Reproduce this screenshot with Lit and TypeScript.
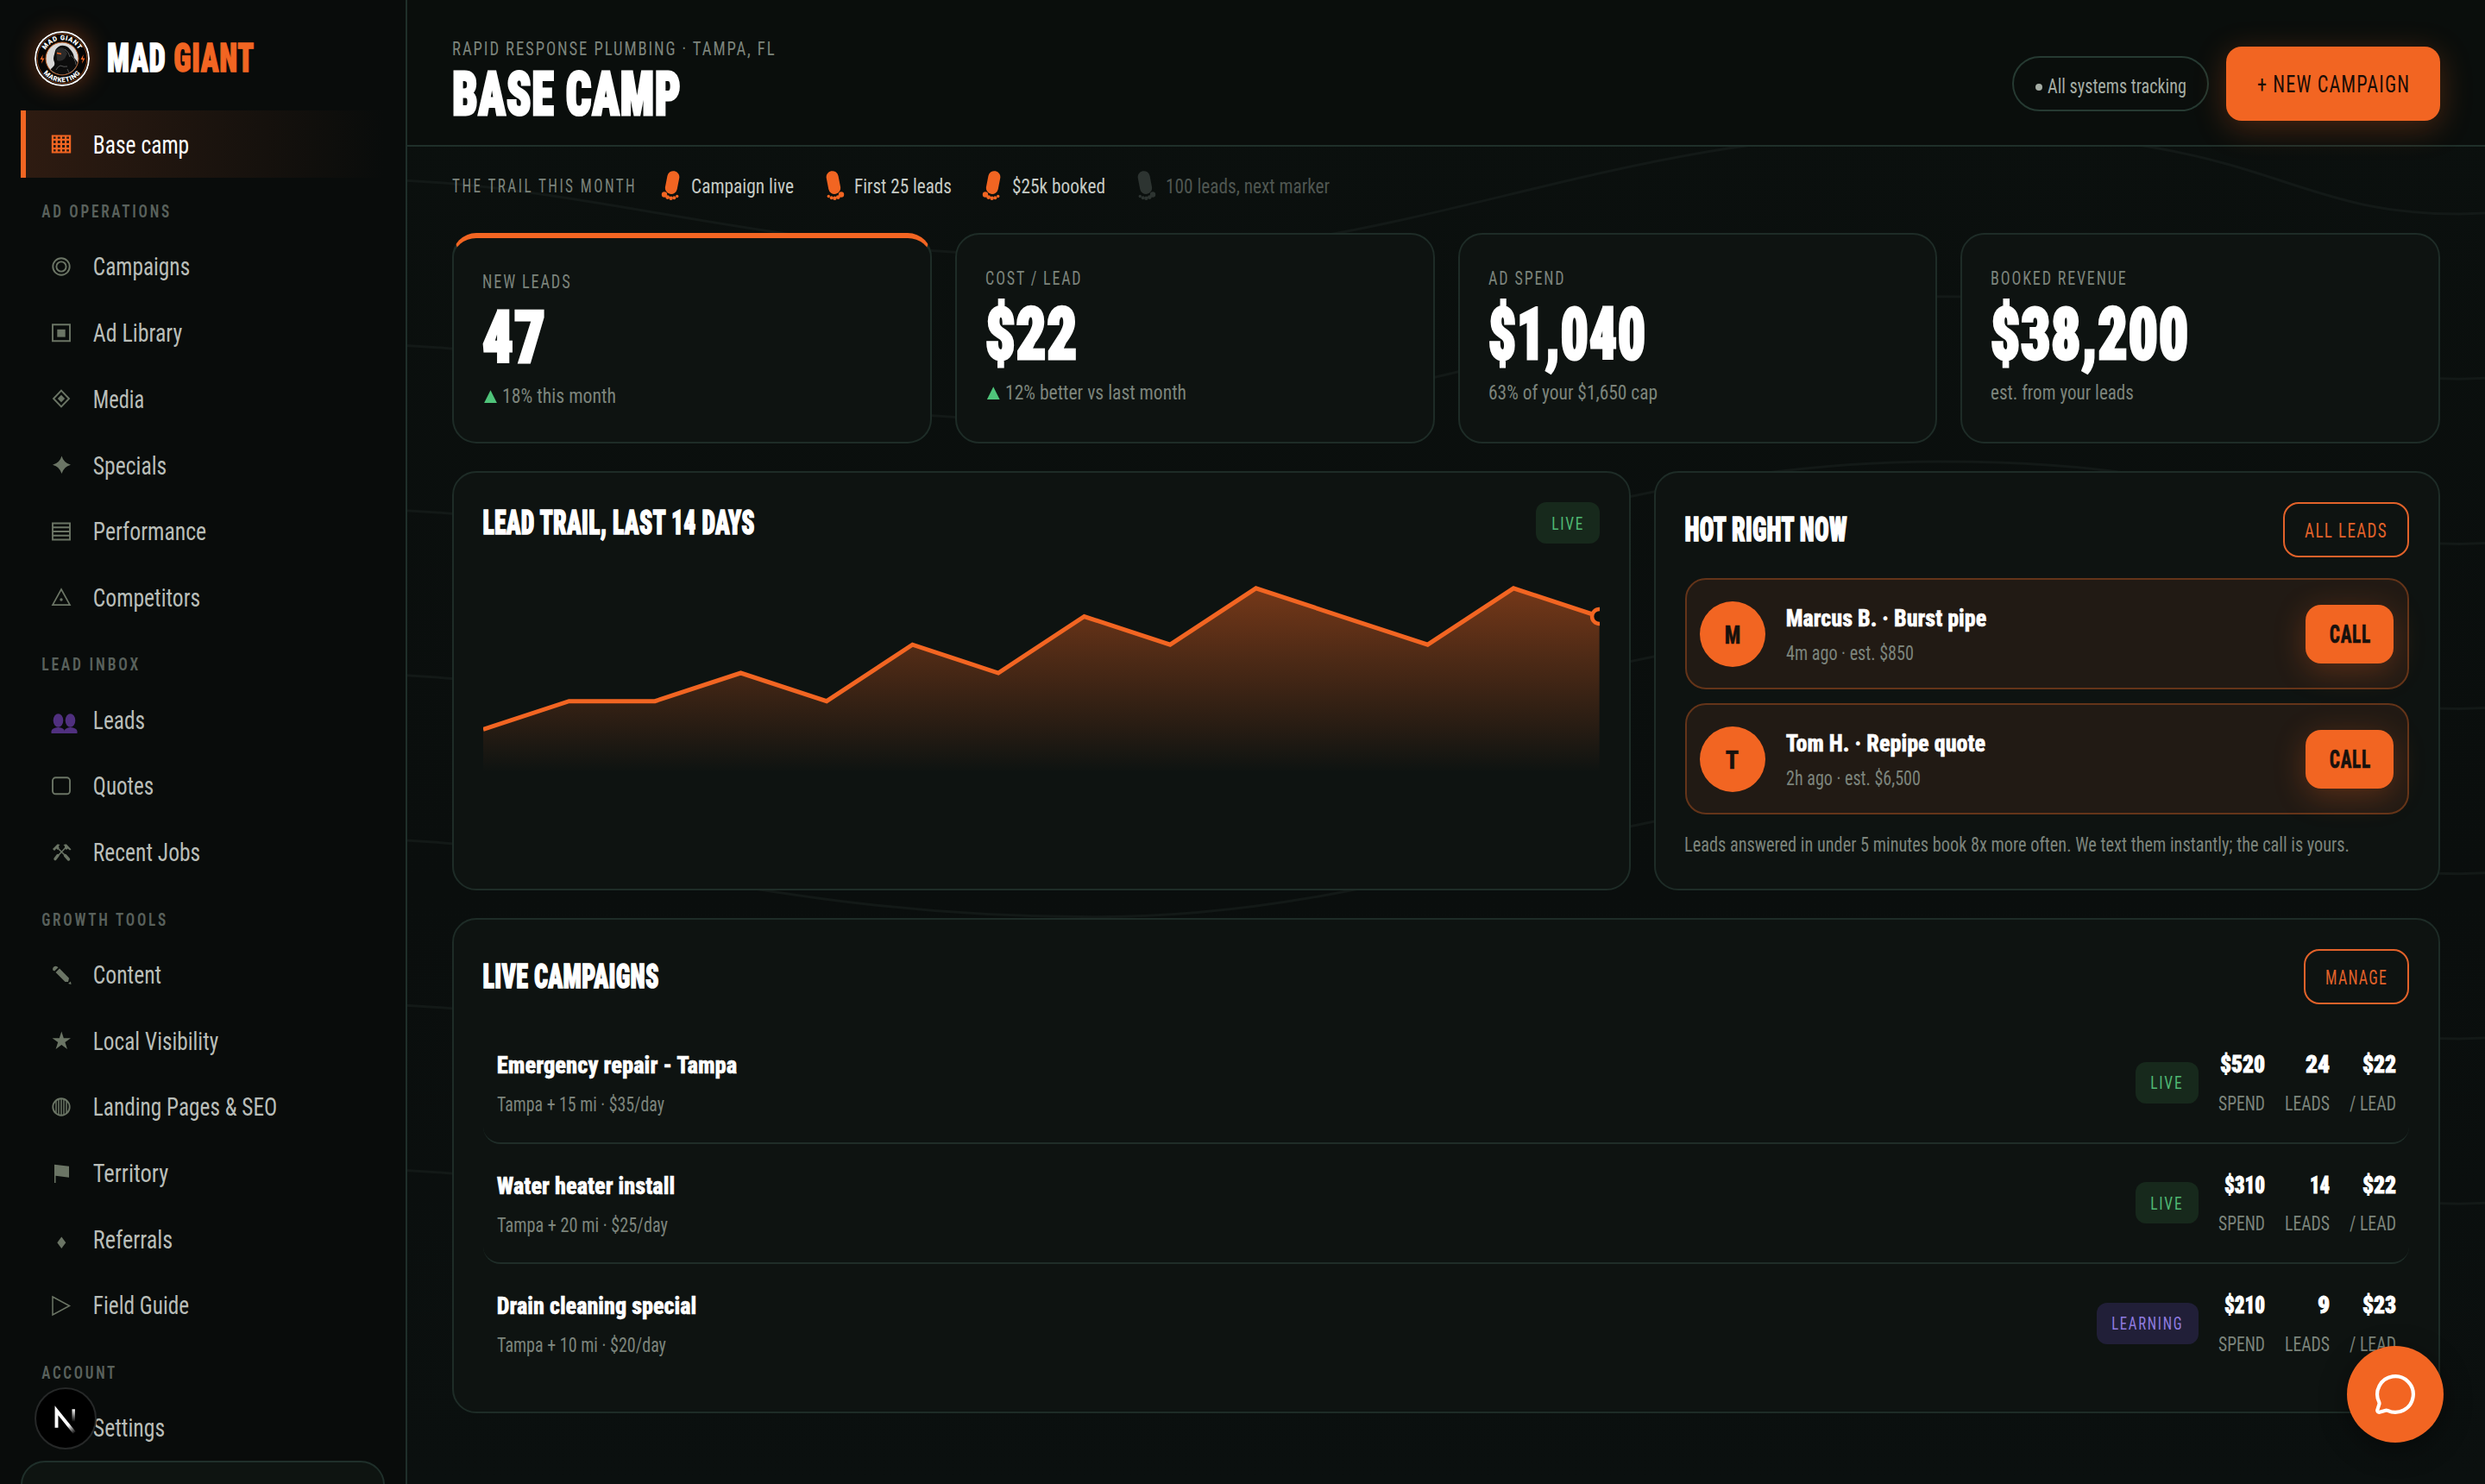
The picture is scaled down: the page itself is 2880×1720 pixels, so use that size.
import { LitElement, html, css, svg, nothing } from 'lit';
import { customElement, property } from 'lit/decorators.js';

// Condensed text: the box is exactly as wide as the word and as tall as its capitals.
@customElement('fit-text')
export class FitText extends LitElement {
    @property()
    text: unknown = '';

    @property({ type: Number })
    w = 100;

    @property({ type: Number })
    cap = 16;

    @property({ type: Number })
    spacing = 0;

    render() {
        const size = this.cap / 0.711;
        const bearing = size * 0.04;
        const length = this.w + bearing * 2 + this.spacing * size * 0.7;

        return html`
            <svg width=${this.w} height=${this.cap}>
                <text x=${-bearing} y=${this.cap} font-size=${size} letter-spacing=${this.spacing * size}
                    textLength=${length} lengthAdjust="spacingAndGlyphs">${this.text}</text>
            </svg>
        `;
    }

    static styles = css`
        :host {
            display: block;
            flex: none;
        }

        svg {
            display: block;
            overflow: visible;
            fill: currentColor;
            font-family: Roboto, "Liberation Sans", sans-serif;
            font-stretch: 75%;
            white-space: pre;
        }
    `;
}

const fit = (text: unknown, w: number, cap: number, cls = '', spacing = 0) => html`
    <fit-text class=${cls} .text=${text} .w=${w} .cap=${cap} .spacing=${spacing}></fit-text>
`;

const icons: Record<string, unknown> = {
    grid: svg`<path d="M.9 1.5h20.2v19H.9zM5.7 1v20M10.9 1v20M16.1 1v20M1 5.8h20M1 11h20M1 16.2h20" stroke-width="2.2"/>`,
    target: svg`<circle cx="11" cy="11" r="9.7"/><circle cx="11" cy="11" r="5.6"/>`,
    square: svg`<path d="M1 1.3h20v19H1z"/><path class="solid" d="M6.3 6.8h9.4v8.8H6.3z"/>`,
    diamond: svg`<path d="M11 1.7l9 9.3-9 9.3L2 11z"/><path class="solid" d="M11 6.8l4.2 4.2-4.2 4.2L6.8 11z"/>`,
    spark: svg`<path class="solid" d="M11.5.5Q13.8 8.6 22 10.7 13.8 12.8 11.5 21 9.2 12.8 1 10.7 9.2 8.6 11.5.5z"/>`,
    rows: svg`<path d="M1 1.5h20v19H1zM1 6.2h20M1 11h20M1 15.8h20"/>`,
    alert: svg`<path d="M11 2l10 18.2H1z" stroke-width="1.7"/><circle class="solid" cx="11" cy="14" r="1.7"/>`,
    people: svg`
        <g class="people">
            <ellipse cx="7.5" cy="12" rx="5.8" ry="7.8"/>
            <path d="M-.5 27v-2.500q.5-4 8-4.500 7 .5 7.5 4.500V27z"/>
            <ellipse cx="21.5" cy="12" rx="5.8" ry="7.8"/>
            <path d="M14.500 27v-2.500q.5-4 7-4.500 7.500.5 8 4.500V27z"/>
        </g>`,
    quote: svg`<rect x="1" y="1.3" width="20" height="19" rx="3.5"/>`,
    hammers: svg`
        <path d="M7 6l9 9M15.500 6L7 15" stroke-width="1.6"/>
        <path d="M15.500 14.500l4 4.500M7 14.500L4 18.600" stroke-width="3.4" stroke-linecap="round"/>
        <path class="solid" d="M1 7l5.500-5.500Q8 1 9.500 2.500L8 3.500l.5 2.500L6.500 8 5.500 6.500 3 9z"/>
        <path class="solid" d="M22.500 7.500L17 1.500Q15 1 13.500 2.500L15 3.500V6l2 2 1.500-1.500 2.500 2z"/>`,
    pencil: svg`
        <path class="solid" d="M1.200 5.500Q.5 1.200 4.500.8q1.700 0 3 1.500L3.200 6.600z"/>
        <path class="solid" d="M4.500 8L9 3.500l11 11.200L19 19h-3.500z"/>
        <path class="solid" d="M19 21l3-2.500.5 3.500z"/>`,
    star: svg`<path class="solid" d="M11.300.500l2.500 7.800H22l-6.600 4.700 2.600 8-6.700-5-6.700 5 2.600-8L.6 8.300h8.200z"/>`,
    globe: svg`<circle cx="11" cy="11" r="9.7"/><path d="M5 3v16M8 2v18M11 1v20M14 2v18M17 3v16" stroke-width="1.5"/>`,
    flag: svg`<path class="solid" d="M3 .8l17 2v13l-15.500-2V22H3z"/>`,
    gem: svg`<path class="solid" d="M11.300 8.500l5 6.800-5 6.700-5-6.700z"/>`,
    play: svg`<path d="M1 1l19.500 10.500L1 22z" stroke-width="1.5"/>`,
};

const nav: { label: string; items: [string, string, number][] }[] = [
    {
        label: '',
        items: [['grid', 'Base camp', 109]],
    },
    {
        label: 'AD OPERATIONS',
        items: [
            ['target', 'Campaigns', 110], ['square', 'Ad Library', 101], ['diamond', 'Media', 57],
            ['spark', 'Specials', 83], ['rows', 'Performance', 129], ['alert', 'Competitors', 122],
        ],
    },
    {
        label: 'LEAD INBOX',
        items: [['people', 'Leads', 58], ['quote', 'Quotes', 68], ['hammers', 'Recent Jobs', 122]],
    },
    {
        label: 'GROWTH TOOLS',
        items: [
            ['pencil', 'Content', 77], ['star', 'Local Visibility', 143], ['globe', 'Landing Pages & SEO', 211],
            ['flag', 'Territory', 85], ['gem', 'Referrals', 90], ['play', 'Field Guide', 109],
        ],
    },
    {
        label: 'ACCOUNT',
        items: [['', 'Settings', 81]],
    },
];

const labelWidths: Record<string, number> = {
    'AD OPERATIONS': 147, 'LEAD INBOX': 111, 'GROWTH TOOLS': 143, 'ACCOUNT': 84,
};

const markers: [string, number, boolean][] = [
    ['Campaign live', 117, true],
    ['First 25 leads', 111, true],
    ['$25k booked', 106, true],
    ['100 leads, next marker', 188, false],
];

const stats: [string, number, string, number, string, number, boolean][] = [
    ['NEW LEADS', 100, '47', 67, '18% this month', 130, true],
    ['COST / LEAD', 109, '$22', 100, '12% better vs last month', 208, true],
    ['AD SPEND', 86, '$1,040', 176, '63% of your $1,650 cap', 194, false],
    ['BOOKED REVENUE', 155, '$38,200', 223, 'est. from your leads', 164, false],
];

const hotLeads: [string, string, number, number, string, number][] = [
    ['M', 'Marcus B. · Burst pipe', 230, 16, '4m ago · est. $850', 146],
    ['T', 'Tom H. · Repipe quote', 229, 13, '2h ago · est. $6,500', 154],
];

const campaigns = [
    { name: 'Emergency repair - Tampa', nw: 276, sub: 'Tampa + 15 mi · $35/day', sw: 192, tag: 'LIVE', values: [['$520', 50], ['24', 26], ['$22', 37]] },
    { name: 'Water heater install', nw: 204, sub: 'Tampa + 20 mi · $25/day', sw: 196, tag: 'LIVE', values: [['$310', 45], ['14', 21], ['$22', 37]] },
    { name: 'Drain cleaning special', nw: 229, sub: 'Tampa + 10 mi · $20/day', sw: 194, tag: 'LEARNING', values: [['$210', 45], ['9', 12], ['$23', 37]] },
] as const;

const columns: [string, number][] = [['SPEND', 52], ['LEADS', 50], ['/ LEAD', 52]];

// Leads per day
const trail = [4, 5, 5, 6, 5, 7, 6, 8, 7, 9, 8, 7, 9, 8];

@customElement('app-root')
export default class AppRoot extends LitElement {
    renderLogo() {
        return html`
            <svg class="logo" viewBox="0 0 64 64">
                <defs>
                    <clipPath id="face"><circle cx="32" cy="32" r="18.5"/></clipPath>
                    <path id="top" d="M10.300 32a21.700 21.700 0 0 1 43.400 0"/>
                    <path id="bottom" d="M4.800 32a27.200 27.200 0 0 0 54.400 0"/>
                </defs>
                <circle cx="32" cy="32" r="31" fill="#050505" stroke="#fff" stroke-width="2"/>
                <circle cx="32" cy="32" r="28.8" fill="none" stroke="#8a4218" stroke-width="1"/>
                <circle cx="32" cy="32" r="19" fill="#d8d8d8" stroke="#b5561d" stroke-width="1"/>
                <g clip-path="url(#face)">
                    <path d="M17 52q-1-6 4-10 3-2 2-6-2-4 0-9 1-8 7-10 7-1 11 4 4 4 5 10 5 5 6 12v14H17z" fill="#0c0c0c"/>
                    <path d="M25 22q5-4 9-2l4 6-3 6q-4 4-9 2z" fill="#2a2a2a"/>
                    <path d="M35 21q5 3 6 9M42 28q5 3 6 11M30 40q4 2 8 1M38 44l3 6M25 45q2-4 5-5" fill="none" stroke="#555" stroke-width="1"/>
                    <path d="M26 25.500l5 1" stroke="#f26522" stroke-width="1.4"/>
                </g>
                <path d="M9.800 27l-3.300 6h2.500l-1.200 5 3.700-6.500H9zM56.800 27l-3.300 6H56l-1.200 5 3.700-6.500H56z" fill="#f26522"/>
                <text class="seal"><textPath href="#top" startOffset="50%">MAD GIANT</textPath></text>
                <text class="seal"><textPath href="#bottom" startOffset="50%">MARKETING</textPath></text>
            </svg>
        `;
    }

    renderSidebar() {
        return html`
            <aside class="sidebar">
                <div class="brand">
                    ${this.renderLogo()}
                    ${fit(svg`MAD <tspan fill="#f26522" stroke="#f26522">GIANT</tspan>`, 166.5, 33.5, 'anton', 0.02)}
                </div>

                ${nav.map(group => html`
                    ${group.label ? html`<div class="group">${fit(group.label, labelWidths[group.label], 14, 'semi', 0.16)}</div>` : nothing}

                    ${group.items.map(([icon, label, width]) => html`
                        <a class="item ${icon === 'grid' ? 'active' : ''}">
                            <svg class="icon" viewBox="0 0 22 22">${icons[icon] ?? nothing}</svg>
                            ${fit(label, width, 21)}
                        </a>
                    `)}
                `)}

                <div class="account"></div>
            </aside>
        `;
    }

    renderHeader() {
        return html`
            <header class="header">
                <div class="heading">
                    ${fit('RAPID RESPONSE PLUMBING · TAMPA, FL', 372, 16, 'muted', 0.1)}
                    ${fit('BASE CAMP', 259, 50, 'anton large', 0.02)}
                </div>

                <div class="actions">
                    <span class="pill"><i class="dot"></i>${fit('All systems tracking', 159, 16.5)}</span>
                    <button class="primary">${fit('+ NEW CAMPAIGN', 174, 19.5, '', 0.05)}</button>
                </div>
            </header>
        `;
    }

    renderTrail() {
        return html`
            <div class="trail">
                ${fit('THE TRAIL THIS MONTH', 210, 16, 'muted', 0.14)}

                ${markers.map(([label, width, done], i) => html`
                    <div class="marker ${done ? '' : 'next'}">
                        <svg class="foot ${i % 2 ? 'flip' : ''}" viewBox="0 0 24 34">
                            <rect x="6.2" y="0" width="14" height="27" rx="7" transform="rotate(11 13 13)"/>
                            <circle cx="4" cy="27.5" r="3.2"/>
                            <circle cx="7.7" cy="30.6" r="2.4"/>
                            <circle cx="11.6" cy="31.8" r="2.2"/>
                            <circle cx="15.3" cy="31.3" r="2"/>
                            <circle cx="18.7" cy="29.5" r="1.7"/>
                        </svg>
                        ${fit(label, width, 17.5)}
                    </div>
                `)}
            </div>
        `;
    }

    renderStats() {
        return html`
            <section class="stats">
                ${stats.map(([label, lw, value, vw, sub, sw, up], i) => html`
                    <div class="card stat ${i === 0 ? 'lead' : ''}">
                        ${fit(label, lw, 15.8, 'muted', 0.1)}
                        ${fit(value, vw, 59.5, 'anton large', 0.01)}
                        <div class="sub">
                            ${up ? html`<i class="up"></i>` : nothing}
                            ${fit(sub, sw, 16.8, 'muted')}
                        </div>
                    </div>
                `)}
            </section>
        `;
    }

    renderChart() {
        const points = trail.map((n, i) => `${(i * 1293.6 / 13).toFixed(1)},${(195.4 - (n - 4) * 32.72).toFixed(1)}`).join(' ');

        return html`
            <svg class="chart" viewBox="0 0 1293.6 260">
                <defs>
                    <linearGradient id="fade" x1="0" y1="0" x2="0" y2="1">
                        <stop offset="0" stop-color="#f26522" stop-opacity=".45"/>
                        <stop offset="1" stop-color="#f26522" stop-opacity="0"/>
                    </linearGradient>
                </defs>
                <polygon points="0,245 ${points} 1293.6,245" fill="url(#fade)"/>
                <polyline points=${points} fill="none" stroke="#f26522" stroke-width="5"/>
                <circle cx="1293.6" cy="64.5" r="8.5" fill="#0a0d0c" stroke="#f26522" stroke-width="4.5"/>
            </svg>
        `;
    }

    renderPanels() {
        return html`
            <section class="panels">
                <div class="card">
                    <div class="head short">
                        ${fit('LEAD TRAIL, LAST 14 DAYS', 312, 27, 'anton', 0.01)}
                        <span class="tag live">${fit('LIVE', 35, 14.8, '', 0.1)}</span>
                    </div>
                    ${this.renderChart()}
                </div>

                <div class="card">
                    <div class="head">
                        ${fit('HOT RIGHT NOW', 185, 27, 'anton', 0.01)}
                        <button class="outline">${fit('ALL LEADS', 93, 17, '', 0.07)}</button>
                    </div>

                    <div class="leads">
                        ${hotLeads.map(([initial, name, nw, iw, sub, sw]) => html`
                            <div class="hot">
                                <span class="avatar">${fit(initial, iw, 21.5, 'bold')}</span>
                                <div class="who">
                                    ${fit(name, nw, 20.2, 'bold white')}
                                    ${fit(sub, sw, 16.8, 'muted')}
                                </div>
                                <button class="primary call">${fit('CALL', 45, 20.5, 'bold', 0.03)}</button>
                            </div>
                        `)}
                    </div>

                    ${fit('Leads answered in under 5 minutes book 8x more often. We text them instantly; the call is yours.', 769, 16.5, 'muted')}
                </div>
            </section>
        `;
    }

    renderCampaigns() {
        return html`
            <section class="card campaigns">
                <div class="head">
                    ${fit('LIVE CAMPAIGNS', 201, 27, 'anton', 0.01)}
                    <button class="outline">${fit('MANAGE', 69, 17, '', 0.07)}</button>
                </div>

                ${campaigns.map(c => html`
                    <div class="campaign">
                        <div class="name">
                            ${fit(c.name, c.nw, 20.2, 'bold white')}
                            ${fit(c.sub, c.sw, 16.8, 'muted')}
                        </div>
                        <span class="tag ${c.tag.toLowerCase()}">${fit(c.tag, c.tag === 'LIVE' ? 35 : 80, 15, '', 0.1)}</span>
                        <div class="figures">
                            ${columns.map(([label, width], i) => html`
                                <div class="figure">
                                    ${fit(c.values[i][0], c.values[i][1], 19.5, 'heavy white')}
                                    ${fit(label, width, 17, 'muted')}
                                </div>
                            `)}
                        </div>
                    </div>
                `)}
            </section>
        `;
    }

    render() {
        return html`
            <svg class="contours" viewBox="0 0 2880 1720">
                ${[0, 1, 2, 3, 4, 5, 6].map(i => svg`
                    <path transform="translate(0 ${i * 191.2})"
                        d="M440 208C700 215 900 298 1268 298S1860 152.500 2247 152.500 2640 248 2850 248L2880 247"/>
                `)}
            </svg>

            ${this.renderSidebar()}

            <main class="main">
                ${this.renderHeader()}

                <div class="body">
                    ${this.renderTrail()}
                    ${this.renderStats()}
                    ${this.renderPanels()}
                    ${this.renderCampaigns()}
                </div>
            </main>

            <div class="dev">
                <svg viewBox="0 0 70 70">
                    <defs>
                        <linearGradient id="diag" gradientUnits="userSpaceOnUse" x1="36" y1="38" x2="47" y2="52">
                            <stop offset="0.3" stop-color="#fff"/>
                            <stop offset="1" stop-color="#fff" stop-opacity="0"/>
                        </linearGradient>
                        <linearGradient id="stem" gradientUnits="userSpaceOnUse" x1="0" y1="24" x2="0" y2="39">
                            <stop offset="0" stop-color="#fff"/>
                            <stop offset="1" stop-color="#fff" stop-opacity="0"/>
                        </linearGradient>
                    </defs>
                    <path d="M24.200 46V25.500L45.500 52" fill="none" stroke="url(#diag)" stroke-width="4"/>
                    <rect x="42.7" y="24" width="3.6" height="15" fill="url(#stem)"/>
                </svg>
            </div>

            <button class="chat">
                <svg viewBox="0 0 24 24">
                    <path d="M2.992 16.342a2 2 0 0 1 .094 1.167l-1.065 3.290a1 1 0 0 0 1.236 1.168l3.413-.998a2 2 0 0 1 1.099.092 10 10 0 1 0-4.777-4.719"/>
                </svg>
            </button>
        `;
    }

    static styles = css`
        :host {
            display: flex;
            position: relative;
            width: 2880px;
            height: 1720px;
            overflow: hidden;
            background: linear-gradient(#0b100e, #0a0e0d 60%, #0b100f);
            color: #b9beb9;
            font-family: Roboto, "Liberation Sans", sans-serif;
        }

        * {
            box-sizing: border-box;
        }

        button {
            border: 0;
            padding: 0;
            background: none;
            display: flex;
            align-items: center;
            justify-content: center;
        }

        .muted { color: #7c847c; }
        .white { color: #fff; }
        .semi { font-weight: 600; }

        .bold {
            font-weight: 800;
            stroke: currentColor;
            stroke-width: 0.5px;
        }

        .heavy {
            font-weight: 900;
            stroke: currentColor;
            stroke-width: 0.8px;
        }

        .anton {
            color: #fff;
            stroke: currentColor;
            stroke-width: 1.4px;
            font-weight: 900;
        }

        .anton.large { stroke-width: 3.2px; }

        .contours {
            position: absolute;
            inset: 0;
            fill: none;
            stroke: #131917;
            stroke-width: 3;
        }

        .sidebar {
            position: relative;
            flex: none;
            width: 472px;
            height: 1720px;
            overflow: hidden;
            border-right: 2px solid #1f2f2a;
            background: #090c0b;
            padding: 0 24px;
        }

        .brand {
            display: flex;
            align-items: center;
            gap: 21.5px;
            height: 128px;
            padding: 8px 0 0 16px;
        }

        .brand fit-text { margin-bottom: 4px; }

        .logo {
            width: 64px;
            height: 64px;
            border-radius: 50%;
            box-shadow: 0 0 28px rgba(242, 101, 34, 0.4);
        }

        .seal {
            fill: #fff;
            font-size: 7.8px;
            font-weight: 900;
            letter-spacing: 0.5px;
            text-anchor: middle;
        }

        .group {
            height: 65.2px;
            padding: 32.6px 0 0 24.5px;
            color: #59615c;
        }

        .item {
            display: flex;
            align-items: center;
            gap: 27px;
            height: 76.7px;
            padding-left: 36px;
        }

        .item.active {
            height: 78px;
            margin-bottom: -0.6px;
            border-left: 6px solid #f26522;
            padding-left: 30px;
            background: linear-gradient(90deg, #2e1b11, rgba(46, 27, 17, 0));
            color: #fff;
        }

        .icon {
            width: 22px;
            height: 22px;
            overflow: visible;
            fill: none;
            stroke: #6b7565;
            stroke-width: 1.9;
        }

        .active .icon { stroke: #f26522; }

        .solid {
            fill: #6b7565;
            stroke: none;
        }

        .people {
            fill: #50307f;
            stroke: none;
        }

        .account {
            height: 120px;
            border: 2px solid #1f2f2a;
            border-radius: 28px;
            background: #0e1411;
        }

        .main {
            position: relative;
            flex: 1;
        }

        .header {
            display: flex;
            justify-content: space-between;
            align-items: flex-start;
            height: 170px;
            padding: 48px 52px 0;
            border-bottom: 2px solid #1f2f2a;
            background: #0a0e0c;
        }

        .heading {
            display: grid;
            gap: 18.5px;
            padding-left: 1px;
        }

        .heading .large { margin-left: 2px; }

        .actions {
            display: flex;
            align-items: center;
            gap: 20px;
            padding-top: 6px;
        }

        .pill {
            display: flex;
            align-items: center;
            justify-content: center;
            gap: 7px;
            width: 228px;
            height: 64px;
            padding-top: 4px;
            border: 2px solid #263a32;
            border-radius: 32px;
            color: #a5ada5;
        }

        .dot {
            width: 8px;
            height: 8px;
            margin-top: 3px;
            border-radius: 50%;
            background: #a5ada5;
        }

        .primary {
            width: 248px;
            height: 86px;
            border-radius: 18px;
            background: #f26522;
            box-shadow: 0 8px 36px rgba(242, 101, 34, 0.28);
            color: #1a0d06;
        }

        .body {
            padding: 28px 52px 0;
        }

        .trail {
            display: flex;
            align-items: center;
            gap: 36px;
            height: 34px;
            padding-left: 1px;
        }

        .trail > fit-text { margin-right: -5px; }

        .marker {
            display: flex;
            align-items: center;
            gap: 12px;
            color: #c6cbc5;
        }

        .foot {
            width: 24px;
            height: 34px;
            fill: #f26522;
        }

        .flip { transform: scaleX(-1); }
        .next { color: #4f5651; }
        .next .foot { fill: #2d3431; }

        .card {
            border: 2px solid #1e2c27;
            border-radius: 28px;
            background: #0e1311;
            padding: 34px;
        }

        .stats {
            display: grid;
            grid-template-columns: repeat(4, 1fr);
            gap: 27px;
            margin-top: 38px;
        }

        .stat {
            height: 244px;
            padding-top: 42px;
        }

        .stat.lead { border-top: 6px solid #f26522; }
        .stat .large { margin: 26.7px 0 30.2px 2px; }

        .sub {
            display: flex;
            align-items: center;
            gap: 7px;
        }

        .up {
            width: 15px;
            height: 15px;
            margin: 2px 0 0 1px;
            background: #4fc47a;
            clip-path: polygon(50% 0, 100% 100%, 0 100%);
        }

        .panels {
            display: grid;
            grid-template-columns: 1365.6px 1fr;
            gap: 27px;
            height: 486px;
            margin: 32px 0;
        }

        .head {
            display: flex;
            justify-content: space-between;
            align-items: center;
            height: 64px;
        }

        .head .anton { margin: 0 0 1.5px 1.2px; }
        .head.short { height: 48px; }

        .chart {
            display: block;
            width: 1293.6px;
            height: 260px;
            margin-top: 20px;
            overflow: hidden;
        }

        .tag {
            display: flex;
            align-items: center;
            height: 48px;
            padding: 0 20px 0 18.5px;
            border-radius: 12px;
        }

        .live {
            background: #17291c;
            color: #4fb873;
        }

        .learning {
            background: #211f38;
            color: #8f7be0;
        }

        .outline {
            height: 64px;
            padding: 0 25px 0 24px;
            border: 2.5px solid #e2622a;
            border-radius: 18px;
            color: #e2622a;
        }

        .leads {
            display: grid;
            gap: 16px;
            margin: 24px 0 26px;
        }

        .hot {
            display: flex;
            align-items: center;
            gap: 25.5px;
            height: 129px;
            padding: 0 16px 0 15px;
            border: 2px solid #643419;
            border-radius: 24px;
            background: #211a14;
        }

        .avatar {
            display: flex;
            align-items: center;
            justify-content: center;
            width: 76px;
            height: 76px;
            border-radius: 50%;
            background: #f26522;
            color: #17110d;
        }

        .who {
            display: grid;
            gap: 21.5px;
            flex: 1;
            padding-top: 2px;
        }

        .call {
            width: 102px;
            height: 68px;
            color: #17110d;
        }

        .campaigns {
            height: 574px;
        }

        .campaigns .head { margin-bottom: 22px; }

        .campaign {
            display: flex;
            align-items: center;
            gap: 24px;
            height: 139.5px;
            padding: 0 16px;
            border-bottom: 2px solid #1f2d28;
            border-radius: 20px;
        }

        .campaign:last-child { border-bottom-color: transparent; }

        .name {
            display: grid;
            gap: 27px;
            flex: 1;
            padding: 3px 0 0 0.8px;
        }

        .figures {
            display: flex;
            gap: 25px;
        }

        .figure {
            display: grid;
            gap: 27px;
            justify-items: end;
        }

        .dev {
            position: absolute;
            left: 40px;
            top: 1608px;
            width: 72px;
            height: 72px;
            border: 2px solid #262828;
            border-radius: 50%;
            background: #000;
        }

        .chat {
            position: absolute;
            left: 2720px;
            top: 1560px;
            width: 112px;
            height: 112px;
            border-radius: 50%;
            background: #f26522;
            box-shadow: 0 8px 32px rgba(0, 0, 0, 0.4);
        }

        .chat svg {
            width: 50px;
            height: 50px;
            fill: none;
            stroke: #fff;
            stroke-width: 2;
            stroke-linecap: round;
            stroke-linejoin: round;
        }
    `;
}
